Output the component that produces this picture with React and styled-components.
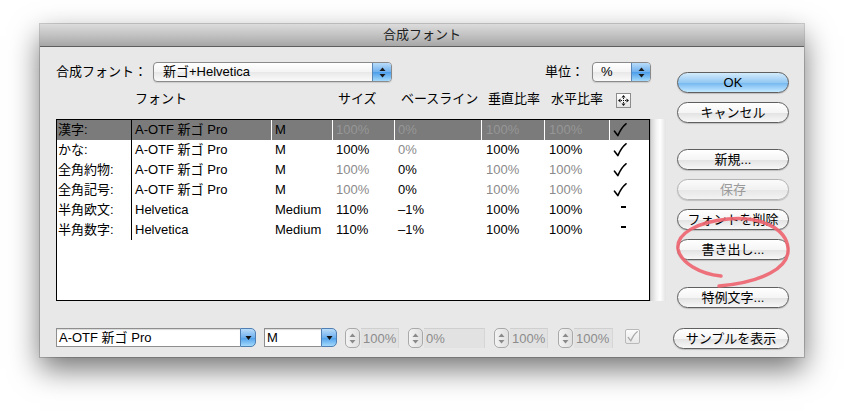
import React from 'react';
import styled, { createGlobalStyle, css } from 'styled-components';

const GlobalStyle = createGlobalStyle`
    html, body {
        margin: 0;
        padding: 0;
        background: #ffffff;
    }
    body {
        font-family: "Liberation Sans", "Noto Sans CJK JP", sans-serif;
        font-size: 13px;
        color: #000;
    }
    * { box-sizing: border-box; }
`

const COLS = '75px 140px 61px 62px 87px 63px 65px 39px';

const Page = styled.div`
    position: relative;
    width: 844px;
    height: 413px;
    padding: 24px 40px 0 40px;
    overflow: hidden;
`

const Window = styled.div`
    width: 764px;
    height: 333px;
    background: #e8e8e8;
    display: flex;
    flex-direction: column;
    box-shadow: 0 12px 28px rgba(0,0,0,0.55), 0 0 0 1px rgba(0,0,0,0.18);
`

const TitleBar = styled.div`
    height: 23px;
    flex: none;
    background: linear-gradient(#dcdcdc, #bdbdbd 60%, #a7a7a7);
    border-bottom: 1px solid #5e5e5e;
    display: flex;
    align-items: center;
    justify-content: center;
    font-size: 13px;
    color: #1e1e1e;
    line-height: 22px;
`

const Body = styled.div`
    flex: 1;
    display: flex;
    padding: 0 15px 0 16px;
`

const LeftPane = styled.div`
    width: 610px;
    display: flex;
    flex-direction: column;
`

const RightPane = styled.div`
    width: 112px;
    margin-left: 11px;
    display: flex;
    flex-direction: column;
`

const TopRow = styled.div`
    margin-top: 15px;
    height: 20px;
    display: flex;
    align-items: center;
    padding-right: 15px;
`

const Label = styled.span`
    line-height: 20px;
    white-space: nowrap;
    margin-right: ${p => p.$gap || 6}px;
    margin-left: ${p => p.$auto ? 'auto' : '0'};
`

const Popup = styled.div`
    width: ${p => p.$w}px;
    height: 20px;
    display: flex;
    border: 1px solid #8a8a8a;
    border-radius: 4px;
    overflow: hidden;
    background: linear-gradient(#ffffff, #f4f4f4 50%, #e8e8e8 51%, #fafafa);
    box-shadow: 0 1px 1px rgba(0,0,0,0.12);
`

const PopupText = styled.div`
    flex: 1;
    padding-left: ${p => p.$pad || 9}px;
    line-height: 18px;
    white-space: nowrap;
`

const BlueKnob = styled.div`
    width: ${p => p.$w || 19}px;
    flex: none;
    border-left: 1px solid #5a86b6;
    background: linear-gradient(#b9dcfa, #6fb0ee 50%, #4b9de9 51%, #a4dafc);
    display: flex;
    align-items: center;
    justify-content: center;
`

const HeaderRow = styled.div`
    margin-top: 8px;
    height: 18px;
    display: grid;
    grid-template-columns: ${COLS};
    padding-left: 1px;
    align-items: center;
`

const HeadCell = styled.div`
    padding-left: ${p => p.$pad || 3}px;
    white-space: nowrap;
    line-height: 18px;
`

const MoveIcon = styled.div`
    width: 15px;
    height: 15px;
    margin-left: 6px;
    margin-top: 2px;
    border: 1px solid #8c8c8c;
    background: linear-gradient(#ffffff, #e4e4e4);
    display: flex;
    align-items: center;
    justify-content: center;
`

const ScrollView = styled.div`
    margin-top: 11px;
    height: 182px;
    display: flex;
`

const Table = styled.div`
    width: 594px;
    border: 1px solid #000;
    background: #fff;
`

const ScrollTrack = styled.div`
    width: 16px;
    border-left: 1px solid #bdbdbd;
    background: linear-gradient(90deg, #d4d4d4, #f2f2f2 35%, #ffffff 60%, #e2e2e2);
`

const Row = styled.div`
    height: 20px;
    display: grid;
    grid-template-columns: ${COLS};
    align-items: stretch;
    background: ${p => p.$sel ? '#7b7b7b' : '#fff'};
`

const Cell = styled.div`
    padding-left: ${p => p.$pad ?? 3}px;
    line-height: 20px;
    white-space: nowrap;
    overflow: hidden;
    color: ${p => p.$dim ? (p.$sel ? '#969696' : '#8a8a8a') : '#000'};
    ${p => p.$line && css`
        border-right: 1px solid ${p.$line};
    `}
    display: flex;
    align-items: center;
`

const Dash = styled.span`
    width: 5px;
    height: 2px;
    background: #000;
    margin-left: 8px;
    transform: translateY(-3px);
`

const BottomRow = styled.div`
    margin-top: 27px;
    height: 21px;
    display: flex;
    align-items: flex-start;
`

const Combo = styled.div`
    width: ${p => p.$w}px;
    height: 19px;
    display: flex;
    margin-right: ${p => p.$mr || 8}px;
`

const ComboField = styled.div`
    flex: 1;
    border: 1px solid #8e8e8e;
    border-right: none;
    background: #fff;
    padding-left: 2px;
    line-height: 17px;
    white-space: nowrap;
    box-shadow: inset 0 1px 1px rgba(0,0,0,0.15);
`

const ComboKnob = styled(BlueKnob)`
    width: 16px;
    border: 1px solid #4f7fb3;
    border-radius: 0 5px 5px 0;
`

const Spin = styled.div`
    width: ${p => p.$w}px;
    height: 20px;
    display: flex;
    margin-right: ${p => p.$mr || 9}px;
`

const Stepper = styled.div`
    width: 15px;
    flex: none;
    border: 1px solid #a9a9a9;
    border-radius: 5px;
    background: linear-gradient(90deg, #f3f3f3, #e0e0e0);
    display: flex;
    align-items: center;
    justify-content: center;
`

const SpinField = styled.div`
    flex: 1;
    margin-left: 1px;
    background: #e2e2e2;
    border-top: 1px solid #cfcfcf;
    border-right: 1px solid #d6d6d6;
    color: #8c8c8c;
    line-height: 19px;
    padding-left: 2px;
    white-space: nowrap;
`

const CheckBox = styled.div`
    width: 15px;
    height: 15px;
    margin-top: 1px;
    border: 1px solid #b9b9b9;
    background: linear-gradient(#fbfbfb, #e8e8e8);
    border-radius: 2px;
    display: flex;
    align-items: center;
    justify-content: center;
`

const Button = styled.div`
    height: 21px;
    margin-top: ${p => p.$mt}px;
    margin-left: ${p => p.$ml || 0}px;
    border-radius: 11px;
    border: 1px solid ${p => p.$off ? '#b4b4b4' : '#5f5f5f'};
    background: ${p => p.$blue
        ? 'linear-gradient(#d4ebfc, #93c8f3 50%, #72b6f0 51%, #c4e9ff)'
        : p.$off
            ? 'linear-gradient(#fbfbfb, #f1f1f1 50%, #e6e6e6 51%, #f3f3f3)'
            : 'linear-gradient(#ffffff, #f5f5f5 50%, #e2e2e2 51%, #f7f7f7)'};
    color: ${p => p.$off ? '#9a9a9a' : '#000'};
    display: flex;
    align-items: center;
    justify-content: center;
    line-height: 19px;
    white-space: nowrap;
    box-shadow: 0 1px 1px rgba(0,0,0,0.18);
`

const Annotation = styled.svg`
    position: absolute;
    left: 0;
    top: 0;
    pointer-events: none;
`

const UpDown = ({ color = '#1a1a1a' }) => (
    <svg width="7" height="11" viewBox="0 0 7 11">
        <path d="M3.5 0.5 L6.5 4 L0.5 4 Z" fill={color} />
        <path d="M3.5 10.5 L6.5 7 L0.5 7 Z" fill={color} />
    </svg>
);

const Down = () => (
    <svg width="7" height="6" viewBox="0 0 7 6">
        <path d="M0.5 1 L6.5 1 L3.5 5 Z" fill="#111" />
    </svg>
);

const Check = ({ color = '#000', size = 14 }) => (
    <svg width={size} height={size} viewBox="0 0 14 14">
        <path d="M1.5 8.2 L4.8 12.6 C7 7.5 9.5 3.5 13 0.8" fill="none" stroke={color} strokeWidth="1.6" strokeLinecap="round" strokeLinejoin="round" />
    </svg>
);

const rows = [
    { name: '漢字:', font: 'A-OTF 新ゴ Pro', style: 'M', size: '100%', base: '0%', v: '100%', h: '100%', dim: [1, 1, 1, 1], mark: 'check', sel: true },
    { name: 'かな:', font: 'A-OTF 新ゴ Pro', style: 'M', size: '100%', base: '0%', v: '100%', h: '100%', dim: [0, 1, 0, 0], mark: 'check' },
    { name: '全角約物:', font: 'A-OTF 新ゴ Pro', style: 'M', size: '100%', base: '0%', v: '100%', h: '100%', dim: [1, 0, 1, 1], mark: 'check' },
    { name: '全角記号:', font: 'A-OTF 新ゴ Pro', style: 'M', size: '100%', base: '0%', v: '100%', h: '100%', dim: [1, 0, 1, 1], mark: 'check' },
    { name: '半角欧文:', font: 'Helvetica', style: 'Medium', size: '110%', base: '–1%', v: '100%', h: '100%', dim: [0, 0, 0, 0], mark: 'dash' },
    { name: '半角数字:', font: 'Helvetica', style: 'Medium', size: '110%', base: '–1%', v: '100%', h: '100%', dim: [0, 0, 0, 0], mark: 'dash' },
];

export default function App() {
    return (
        <Page>
            <GlobalStyle />
            <Window>
                <TitleBar>合成フォント</TitleBar>
                <Body>
                    <LeftPane>
                        <TopRow>
                            <Label>合成フォント：</Label>
                            <Popup $w={239}>
                                <PopupText>新ゴ+Helvetica</PopupText>
                                <BlueKnob><UpDown /></BlueKnob>
                            </Popup>
                            <Label $auto $gap={8}>単位：</Label>
                            <Popup $w={59}>
                                <PopupText $pad={8}>%</PopupText>
                                <BlueKnob><UpDown /></BlueKnob>
                            </Popup>
                        </TopRow>

                        <HeaderRow>
                            <div />
                            <HeadCell>フォント</HeadCell>
                            <div />
                            <HeadCell $pad={5}>サイズ</HeadCell>
                            <HeadCell $pad={6}>ベースライン</HeadCell>
                            <HeadCell $pad={6}>垂直比率</HeadCell>
                            <HeadCell $pad={6}>水平比率</HeadCell>
                            <MoveIcon>
                                <svg width="11" height="11" viewBox="0 0 11 11">
                                    <path d="M5.5 1 V10 M1 5.5 H10" stroke="#111" strokeWidth="1" strokeDasharray="1 1" />
                                    <path d="M5.5 0 L7.5 2.5 L3.5 2.5 Z M5.5 11 L7.5 8.5 L3.5 8.5 Z M0 5.5 L2.5 3.5 L2.5 7.5 Z M11 5.5 L8.5 3.5 L8.5 7.5 Z" fill="#111" />
                                </svg>
                            </MoveIcon>
                        </HeaderRow>

                        <ScrollView>
                            <Table>
                                {rows.map((r, i) => {
                                    const sep = r.sel ? '#ffffff' : null;
                                    return (
                                        <Row key={i} $sel={r.sel}>
                                            <Cell $pad={1} $line="#000">{r.name}</Cell>
                                            <Cell $line={sep}>{r.font}</Cell>
                                            <Cell $line={sep}>{r.style}</Cell>
                                            <Cell $line={sep} $dim={r.dim[0]} $sel={r.sel}>{r.size}</Cell>
                                            <Cell $line={sep} $dim={r.dim[1]} $sel={r.sel}>{r.base}</Cell>
                                            <Cell $line={sep} $pad={4} $dim={r.dim[2]} $sel={r.sel}>{r.v}</Cell>
                                            <Cell $line={sep} $pad={4} $dim={r.dim[3]} $sel={r.sel}>{r.h}</Cell>
                                            <Cell $pad={3}>
                                                {r.mark === 'check' ? <Check /> : <Dash />}
                                            </Cell>
                                        </Row>
                                    );
                                })}
                            </Table>
                            <ScrollTrack />
                        </ScrollView>

                        <BottomRow>
                            <Combo $w={200}>
                                <ComboField>A-OTF 新ゴ Pro</ComboField>
                                <ComboKnob><Down /></ComboKnob>
                            </Combo>
                            <Combo $w={73}>
                                <ComboField>M</ComboField>
                                <ComboKnob><Down /></ComboKnob>
                            </Combo>
                            <Spin $w={54}>
                                <Stepper><UpDown color="#8a8a8a" /></Stepper>
                                <SpinField>100%</SpinField>
                            </Spin>
                            <Spin $w={77}>
                                <Stepper><UpDown color="#8a8a8a" /></Stepper>
                                <SpinField>0%</SpinField>
                            </Spin>
                            <Spin $w={54} $mr={10}>
                                <Stepper><UpDown color="#8a8a8a" /></Stepper>
                                <SpinField>100%</SpinField>
                            </Spin>
                            <Spin $w={55} $mr={12}>
                                <Stepper><UpDown color="#8a8a8a" /></Stepper>
                                <SpinField>100%</SpinField>
                            </Spin>
                            <CheckBox><Check color="#a8a8a8" size={11} /></CheckBox>
                        </BottomRow>
                    </LeftPane>

                    <RightPane>
                        <Button $mt={25} $blue>OK</Button>
                        <Button $mt={9}>キャンセル</Button>
                        <Button $mt={26}>新規...</Button>
                        <Button $mt={9} $off>保存</Button>
                        <Button $mt={9}>フォントを削除</Button>
                        <Button $mt={9}>書き出し...</Button>
                        <Button $mt={27}>特例文字...</Button>
                        <Button $mt={20} $ml={-4}>サンプルを表示</Button>
                    </RightPane>
                </Body>
            </Window>

            <Annotation width="844" height="413" viewBox="0 0 844 413">
                <path
                    d="M721 276 C 700 274, 681 263, 678 249 C 676 233, 698 222, 728 219 C 760 216, 786 228, 788 248 C 790 268, 762 282, 719 286"
                    fill="none"
                    stroke="#ee6570"
                    strokeWidth="3.4"
                    strokeLinecap="round"
                    opacity="0.92"
                />
            </Annotation>
        </Page>
    );
}
